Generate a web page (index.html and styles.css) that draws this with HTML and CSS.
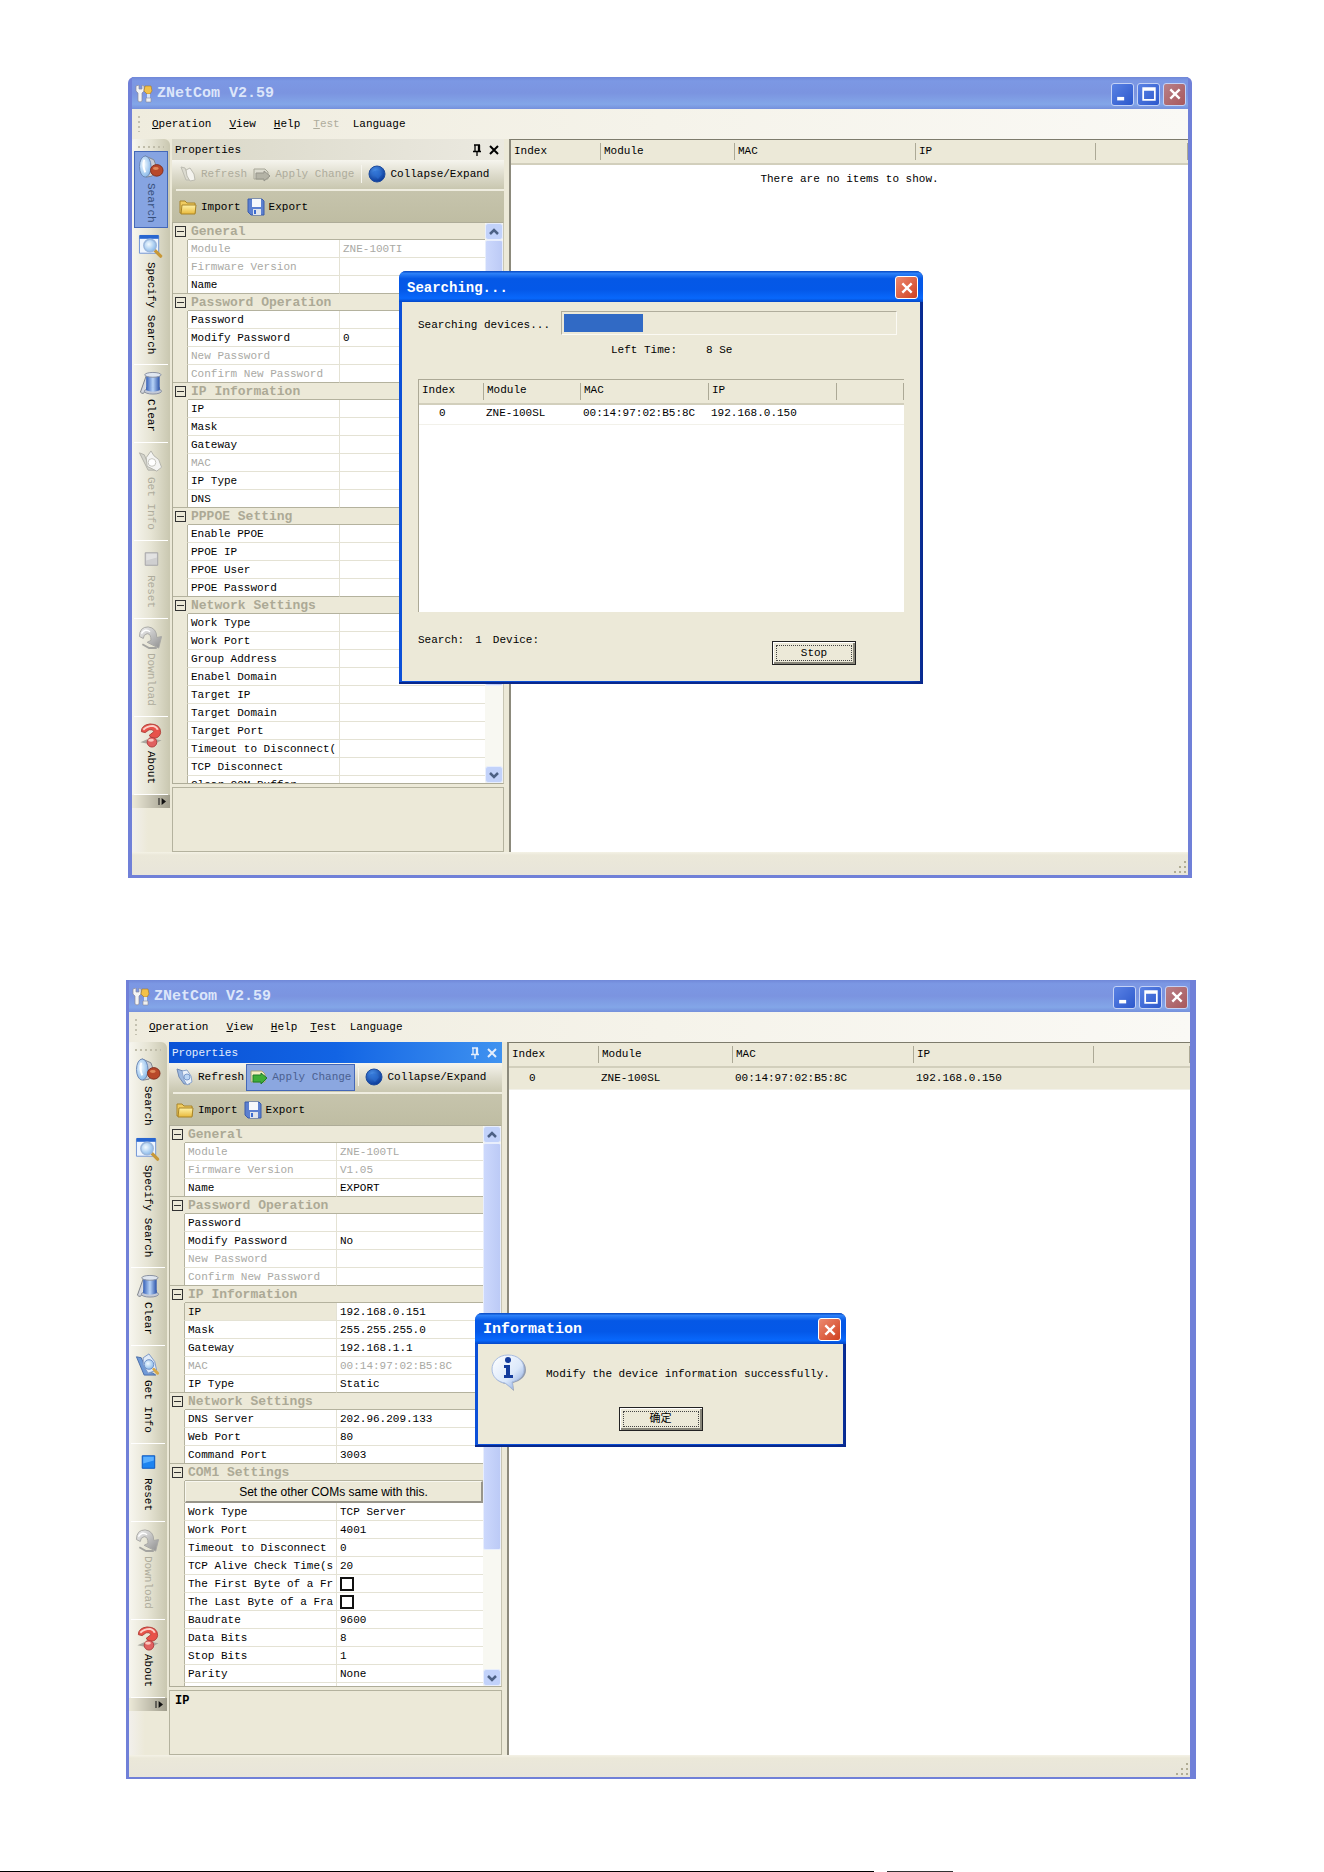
FILE: index.html
```html
<!DOCTYPE html>
<html lang="en">

<head>
  <meta charset="UTF-8">
  <title>ZNetCom V2.59</title>
  <link rel="stylesheet" href="styles.css">
</head>

<body>

  <!-- ICONS -->
  <svg class="icon-defs" width="0" height="0" aria-hidden="true">
    <defs>
      <linearGradient id="gBlue" x1="0" y1="0" x2="1" y2="0">
        <stop offset="0" stop-color="#3560b8" /><stop offset=".5" stop-color="#b8d4f8" /><stop offset="1" stop-color="#2b52a8" />
      </linearGradient>
      <radialGradient id="gLens" cx=".4" cy=".4" r=".7">
        <stop offset="0" stop-color="#f2faff" /><stop offset="1" stop-color="#7db2e8" />
      </radialGradient>
      <radialGradient id="gGlobe" cx=".4" cy=".3" r=".7">
        <stop offset="0" stop-color="#4a90e8" /><stop offset="1" stop-color="#0a3a9a" />
      </radialGradient>
      <linearGradient id="gFolder" x1="0" y1="0" x2="0" y2="1">
        <stop offset="0" stop-color="#fff3a8" /><stop offset="1" stop-color="#e8b83a" />
      </linearGradient>
      <linearGradient id="gGray" x1="0" y1="0" x2="1" y2="1">
        <stop offset="0" stop-color="#f2f2f2" /><stop offset="1" stop-color="#8e8e8e" />
      </linearGradient>
      <linearGradient id="gBubble" x1="0" y1="0" x2="1" y2="1">
        <stop offset="0" stop-color="#ffffff" /><stop offset=".6" stop-color="#dbe8fa" /><stop offset="1" stop-color="#7c9cd8" />
      </linearGradient>
    </defs>
    <symbol id="app" viewBox="0 0 18 18">
      <path d="M1 1v5l2 2v8q2 2 4 0V8l2-2V1L7 0v4H4V0z" fill="#f4f4f4" stroke="#8a8a98" stroke-width=".7" />
      <path d="M10 1h6l1 5-2 3h-3l-3-3z" fill="#f2c14a" stroke="#a87820" stroke-width=".6" />
      <path d="M12 9h3v4h-3z" fill="#d8e4f4" /><path d="M11 13h5v4h-5z" fill="#f0f0f0" stroke="#8a8a98" stroke-width=".6" />
    </symbol>
    <symbol id="search" viewBox="0 0 26 26">
      <path d="M7 1l9 4 3 8-5 9-6 1z" fill="#c9cdd4" stroke="#7d8590" />
      <ellipse cx="7" cy="12" rx="6" ry="11" fill="url(#gLens)" stroke="#6b86b4" />
      <path d="M6 5q-2 6 1 13" stroke="#fff" stroke-width="2" fill="none" />
      <ellipse cx="19" cy="16" rx="6.500" ry="6" fill="#b8482a" stroke="#803020" /><ellipse cx="18" cy="14" rx="3" ry="1.500" fill="#e08a5c" />
    </symbol>
    <symbol id="specify" viewBox="0 0 26 26">
      <path d="M1 2h20v18H1z" fill="#eef5fe" stroke="#6f94d4" /><path d="M1 1h20v4H1z" fill="#2866d0" />
      <path d="M17 17l6 6" stroke="#c89838" stroke-width="3.500" stroke-linecap="round" />
      <circle cx="12" cy="12" r="6.500" fill="url(#gLens)" stroke="#9db8dc" stroke-width="1.500" />
    </symbol>
    <symbol id="clear" viewBox="0 0 26 26">
      <path d="M8 5L2 22q3 3 5-1" fill="#d4d8e0" stroke="#7c8088" />
      <path d="M8 4h14v17H8z" fill="url(#gBlue)" /><ellipse cx="15" cy="4" rx="8.500" ry="2.500" fill="#dfe6f0" stroke="#8890a0" />
      <ellipse cx="15" cy="21" rx="9" ry="3" fill="#c4cad8" stroke="#8890a0" /><path d="M8 17h14v3q-7 3-14 0z" fill="url(#gBlue)" />
    </symbol>
    <symbol id="getinfo" viewBox="0 0 26 26">
      <path d="M1 5l5 1 6 14 6 2 3 2-12 0z" fill="#6f9ad8" stroke="#4a6ca8" />
      <path d="M8 6l6-4 6 8 2 9-9 3-5-9z" fill="#dfeaf8" stroke="#7c98c8" />
      <circle cx="14" cy="13" r="5" fill="url(#gLens)" stroke="#6c8cc4" /><path d="M19 18l4 4" stroke="#d8a848" stroke-width="3" stroke-linecap="round" />
    </symbol>
    <symbol id="getinfo-off" viewBox="0 0 26 26">
      <path d="M1 4l5 2 5 12 7 4-8 0z" fill="#d4d4cc" stroke="#b0b0a8" />
      <path d="M8 9l5-7 3 5 5 4 3 8-5 4-10-5z" fill="#f4f4f2" stroke="#b4b4ac" /><circle cx="14" cy="14" r="4" fill="#fff" stroke="#c4c4bc" />
    </symbol>
    <symbol id="reset" viewBox="0 0 26 26">
      <path d="M7 6h13v13H7z" fill="#1e84f0" stroke="#0a56c0" /><path d="M8 7h11v4L8 14z" fill="#5cb0ff" />
    </symbol>
    <symbol id="reset-off" viewBox="0 0 26 26">
      <path d="M7 6h13v13H7z" fill="#cfcfd0" stroke="#a4a4a8" /><path d="M8 7h11v4L8 14z" fill="#e2e2e2" />
    </symbol>
    <symbol id="download" viewBox="0 0 26 26">
      <path d="M1 12Q1 2 10 2q9 1 9 11l5-1-3 12-12-6 4-2q0-7-4-7-4 1-4 5z" fill="url(#gGray)" stroke="#a8a8a4" />
      <path d="M3 9q4-6 9-2" stroke="#fff" stroke-width="1.500" fill="none" /><path d="M4 20l7 4 8 0" stroke="#a4a4a0" stroke-width="2" fill="none" />
    </symbol>
    <symbol id="about" viewBox="0 0 26 26">
      <path d="M2 20l7-3 3 5zM24 18l-6-1-2 5z" fill="#a8a8a0" />
      <path d="M3 9Q3 2 12 1q11 0 11 9-1 6-8 6l-4-3 5-4q-1-3-5-2l-4 3z" fill="#e8524a" stroke="#b04038" />
      <path d="M5 7q4-4 10-4 4 1 5 4" stroke="#fbd0c8" stroke-width="2" fill="none" />
      <circle cx="14" cy="20" r="5" fill="#e06060" stroke="#b04040" /><ellipse cx="13" cy="18" rx="3" ry="1.500" fill="#fbc8c0" />
    </symbol>
    <symbol id="refresh" viewBox="0 0 18 18">
      <path d="M1 1l6 2 4 10 3 3H8L3 9z" fill="#9cb8e0" stroke="#7088b0" /><path d="M6 3l5-1 4 6 1 6-5 3-3-5z" fill="#eaf1fa" stroke="#8aa4cc" /><circle cx="11" cy="9" r="3" fill="#bcd6f4" stroke="#7c9ccc" />
    </symbol>
    <symbol id="refresh-off" viewBox="0 0 18 18">
      <path d="M2 2l4 1 4 9 2 3-5 0z" fill="#dcdbd0" stroke="#bcbbb0" /><path d="M7 5l4-2 4 6 1 6-5 1-3-5z" fill="#f4f3ee" stroke="#bcbbb0" />
    </symbol>
    <symbol id="apply" viewBox="0 0 18 18">
      <path d="M1 3h11l3 3v8H1z" fill="#f6eec4" stroke="#a0a078" /><path d="M3 7h8V5l6 5-6 6v-2H3z" fill="#3fae38" stroke="#1f7c28" />
    </symbol>
    <symbol id="apply-off" viewBox="0 0 18 18">
      <path d="M1 4h11l3 3v7H1z" fill="#dddcd0" stroke="#a8a798" /><path d="M3 8h8V6l6 5-6 5v-2H3z" fill="#b4b3a6" stroke="#96958a" />
    </symbol>
    <symbol id="globe" viewBox="0 0 18 18">
      <circle cx="9" cy="9" r="8" fill="url(#gGlobe)" stroke="#1f4c9c" /><path d="M4 8q3-4 7-2l3 3-4 5z" fill="#2a6cd0" opacity=".6" />
    </symbol>
    <symbol id="import" viewBox="0 0 18 18">
      <path d="M1 3h5l2 2h8v10H1z" fill="#f0cc60" stroke="#a88428" /><path d="M3 7h14l-1 9H2z" fill="url(#gFolder)" stroke="#a88428" />
    </symbol>
    <symbol id="export" viewBox="0 0 18 18">
      <path d="M1 1h14l2 2v14H4l-3-3z" fill="#5c80d0" stroke="#3a5cac" /><path d="M5 1h9v8H5z" fill="#f6f8fc" /><path d="M6 11h8v6H6z" fill="#dfe4ec" /><path d="M7 12h2v4H7z" fill="#3c6cd0" />
    </symbol>
    <symbol id="pin" viewBox="0 0 10 12">
      <path d="M2 1h6M3 1v6M6.500 1v6M7.500 1v6M1 7.500h8M5 8v4" fill="none" stroke="currentColor" stroke-width="1.300" />
    </symbol>
    <symbol id="cross" viewBox="0 0 12 12"><path d="M2 2l8 8M10 2l-8 8" fill="none" stroke="currentColor" stroke-width="2" /></symbol>
    <symbol id="minimize" viewBox="0 0 12 12"><path d="M1 10h6" fill="none" stroke="currentColor" stroke-width="3" /></symbol>
    <symbol id="maximize" viewBox="0 0 12 12"><path d="M1 1h10v10H1zM1 2.500h10" fill="none" stroke="currentColor" stroke-width="1.500" /></symbol>
    <symbol id="up" viewBox="0 0 12 12"><path d="M2 8l4-4 4 4" fill="none" stroke="#4d6185" stroke-width="2.500" /></symbol>
    <symbol id="down" viewBox="0 0 12 12"><path d="M2 4l4 4 4-4" fill="none" stroke="#4d6185" stroke-width="2.500" /></symbol>
    <symbol id="more" viewBox="0 0 10 8"><path d="M1 0v8" stroke="#222" stroke-width="1.300" /><path d="M4 0l5 4-5 4z" fill="#111" /></symbol>
    <symbol id="size-grip" viewBox="0 0 12 12"><path d="M10 0h2v2h-2zM10 5h2v2h-2zM5 5h2v2H5zM10 10h2v2h-2zM5 10h2v2H5zM0 10h2v2H0z" fill="#b0ac94" /></symbol>
    <symbol id="info" viewBox="0 0 38 38">
      <path d="M19 2C9 2 3 9 3 16c0 8 6 13 13 14l8 7-1-8c8-2 13-7 13-13C36 8 29 2 19 2z" fill="#6c7ca0" opacity=".7" />
      <path d="M18 1C8 1 2 8 2 15c0 8 6 13 13 14l8 6-1-7c8-2 12-7 12-13C34 7 28 1 18 1z" fill="url(#gBubble)" stroke="#a8bce0" />
      <circle cx="18" cy="6" r="3" fill="#143c9c" /><path d="M14 11h6v10h3v3h-9v-3h2v-7h-2z" fill="#143c9c" />
    </symbol>
  </svg>

  <!-- SEARCH WINDOW -->
  <section class="window window-search">
    <header class="titlebar">
      <svg class="icon-small"><use href="#app" /></svg>
      <h1>ZNetCom V2.59</h1>
      <button class="caption" aria-label="Minimize"><svg><use href="#minimize" /></svg></button>
      <button class="caption" aria-label="Maximize"><svg><use href="#maximize" /></svg></button>
      <button class="caption caption-close" aria-label="Close"><svg><use href="#cross" /></svg></button>
    </header>

    <nav class="menubar">
      <button><u>O</u>peration</button>
      <button><u>V</u>iew</button>
      <button class="tight"><u>H</u>elp</button>
      <button class="tight" disabled><u>T</u>est</button>
      <button>Language</button>
    </nav>

    <div class="window-body">
      <aside class="strip">
        <div class="strip-items">
          <button class="strip-first selected"><svg><use href="#search" /></svg><span>Search</span></button>
          <button><svg><use href="#specify" /></svg><span>Specify Search</span></button>
          <button><svg><use href="#clear" /></svg><span>Clear</span></button>
          <button disabled><svg><use href="#getinfo-off" /></svg><span>Get Info</span></button>
          <button disabled><svg><use href="#reset-off" /></svg><span>Reset</span></button>
          <button disabled><svg><use href="#download" /></svg><span>Download</span></button>
          <button><svg><use href="#about" /></svg><span>About</span></button>
        </div>
        <button class="strip-more" aria-label="More"><svg><use href="#more" /></svg></button>
      </aside>

      <div class="panel">
        <div class="panel-head">
          <h2>Properties</h2>
          <svg><use href="#pin" /></svg>
          <svg><use href="#cross" /></svg>
        </div>
        <div class="toolbar">
          <div class="toolbar-row">
            <button disabled><svg class="icon-small"><use href="#refresh-off" /></svg>Refresh</button>
            <button disabled><svg class="icon-small"><use href="#apply-off" /></svg>Apply Change</button>
            <i class="divider"></i>
            <button><svg class="icon-small"><use href="#globe" /></svg>Collapse/Expand</button>
          </div>
          <div class="toolbar-row">
            <button><svg class="icon-small"><use href="#import" /></svg>Import</button>
            <button><svg class="icon-small"><use href="#export" /></svg>Export</button>
          </div>
        </div>
        <div class="grid-box">
          <div class="grid-clip">
            <table class="grid">
              <colgroup><col class="col-gutter"><col class="col-name"><col></colgroup>
              <tbody id="searchGrid"></tbody>
            </table>
          </div>
          <div class="scrollbar">
            <button aria-label="Scroll up"><svg><use href="#up" /></svg></button>
            <div class="thumb"></div>
            <button aria-label="Scroll down"><svg><use href="#down" /></svg></button>
          </div>
        </div>
        <div class="description"></div>
      </div>

      <div class="list">
        <table class="devices">
          <colgroup><col class="col-index"><col class="col-module"><col class="col-mac"><col class="col-ip"><col></colgroup>
          <thead>
            <tr><th>Index</th><th>Module</th><th>MAC</th><th>IP</th><th></th></tr>
          </thead>
        </table>
        <p class="empty">There are no items to show.</p>
      </div>
    </div>
    <footer class="statusbar"><svg><use href="#size-grip" /></svg></footer>

    <div class="dialog dialog-search" role="dialog" aria-labelledby="searchTitle">
      <header class="dialog-title">
        <h2 id="searchTitle">Searching...</h2>
        <button class="caption dialog-close" aria-label="Close"><svg><use href="#cross" /></svg></button>
      </header>
      <div class="search-content">
        <div class="progress-row">
          <span>Searching devices...</span>
          <div class="progress"><div class="progress-fill" style="width: 24%"></div></div>
        </div>
        <p class="time-left"><span>Left Time:</span><span>8 Se</span></p>
        <div class="found-box">
          <table class="devices found">
            <colgroup><col class="col-index"><col class="col-module"><col class="col-mac"><col class="col-ip"><col></colgroup>
            <thead>
              <tr><th>Index</th><th>Module</th><th>MAC</th><th>IP</th><th></th></tr>
            </thead>
            <tbody>
              <tr><td>0</td><td>ZNE-100SL</td><td>00:14:97:02:B5:8C</td><td>192.168.0.150</td><td></td></tr>
            </tbody>
          </table>
        </div>
        <div class="search-foot">
          <p><span>Search:</span><span>1</span><span>Device:</span></p>
          <button class="classic"><span>Stop</span></button>
        </div>
      </div>
    </div>
  </section>

  <!-- MODIFY WINDOW -->
  <section class="window window-modify">
    <header class="titlebar">
      <svg class="icon-small"><use href="#app" /></svg>
      <h1>ZNetCom V2.59</h1>
      <button class="caption" aria-label="Minimize"><svg><use href="#minimize" /></svg></button>
      <button class="caption" aria-label="Maximize"><svg><use href="#maximize" /></svg></button>
      <button class="caption caption-close" aria-label="Close"><svg><use href="#cross" /></svg></button>
    </header>

    <nav class="menubar">
      <button><u>O</u>peration</button>
      <button><u>V</u>iew</button>
      <button class="tight"><u>H</u>elp</button>
      <button class="tight"><u>T</u>est</button>
      <button>Language</button>
    </nav>

    <div class="window-body">
      <aside class="strip">
        <div class="strip-items">
          <button class="strip-first"><svg><use href="#search" /></svg><span>Search</span></button>
          <button><svg><use href="#specify" /></svg><span>Specify Search</span></button>
          <button><svg><use href="#clear" /></svg><span>Clear</span></button>
          <button><svg><use href="#getinfo" /></svg><span>Get Info</span></button>
          <button><svg><use href="#reset" /></svg><span>Reset</span></button>
          <button disabled><svg><use href="#download" /></svg><span>Download</span></button>
          <button><svg><use href="#about" /></svg><span>About</span></button>
        </div>
        <button class="strip-more" aria-label="More"><svg><use href="#more" /></svg></button>
      </aside>

      <div class="panel">
        <div class="panel-head active">
          <h2>Properties</h2>
          <svg><use href="#pin" /></svg>
          <svg><use href="#cross" /></svg>
        </div>
        <div class="toolbar">
          <div class="toolbar-row">
            <button><svg class="icon-small"><use href="#refresh" /></svg>Refresh</button>
            <button class="selected"><svg class="icon-small"><use href="#apply" /></svg>Apply Change</button>
            <i class="divider"></i>
            <button><svg class="icon-small"><use href="#globe" /></svg>Collapse/Expand</button>
          </div>
          <div class="toolbar-row">
            <button><svg class="icon-small"><use href="#import" /></svg>Import</button>
            <button><svg class="icon-small"><use href="#export" /></svg>Export</button>
          </div>
        </div>
        <div class="grid-box">
          <div class="grid-clip">
            <table class="grid">
              <colgroup><col class="col-gutter"><col class="col-name"><col></colgroup>
              <tbody id="modifyGrid"></tbody>
            </table>
          </div>
          <div class="scrollbar">
            <button aria-label="Scroll up"><svg><use href="#up" /></svg></button>
            <div class="thumb"></div>
            <button aria-label="Scroll down"><svg><use href="#down" /></svg></button>
          </div>
        </div>
        <div class="description">IP</div>
      </div>

      <div class="list">
        <table class="devices">
          <colgroup><col class="col-index"><col class="col-module"><col class="col-mac"><col class="col-ip"><col></colgroup>
          <thead>
            <tr><th>Index</th><th>Module</th><th>MAC</th><th>IP</th><th></th></tr>
          </thead>
          <tbody>
            <tr class="current"><td>0</td><td>ZNE-100SL</td><td>00:14:97:02:B5:8C</td><td>192.168.0.150</td><td></td></tr>
          </tbody>
        </table>
      </div>
    </div>
    <footer class="statusbar"><svg><use href="#size-grip" /></svg></footer>

    <div class="dialog dialog-info" role="dialog" aria-labelledby="infoTitle">
      <header class="dialog-title">
        <h2 id="infoTitle">Information</h2>
        <button class="caption dialog-close" aria-label="Close"><svg><use href="#cross" /></svg></button>
      </header>
      <div class="info-content">
        <div class="info-message">
          <svg><use href="#info" /></svg>
          <p>Modify the device information successfully.</p>
        </div>
        <button class="classic"><span>确定</span></button>
      </div>
    </div>
  </section>

  <div class="page-rule"></div>

  <script src="script.js"></script>
</body>

</html>
```

FILE: styles.css
```css
* {
  box-sizing: border-box;
}

body {
  margin: 0;
  background: #fff;
  font-family: "Liberation Mono", "Noto Sans CJK SC", monospace;
  font-size: 11px;
  line-height: 14px;
  color: #000;
}

h1,
h2,
p {
  margin: 0;
}

button {
  font: inherit;
  color: inherit;
  padding: 0;
  border: 0;
  background: none;
  white-space: nowrap;
}

button:disabled {
  color: #aeac9c;
}

svg {
  display: block;
  flex: none;
}

.icon-defs {
  position: absolute;
}

.icon-small {
  width: 18px;
  height: 18px;
}

/* window frame */
.window {
  position: relative;
  padding: 0 4px 3px;
  background: #7080d8;
  border-radius: 6px 6px 0 0;
}

.window-search {
  margin: 77px 132px 102px 128px;
}

.window-modify {
  margin: 0 128px 92px 126px;
  padding: 0 6px 2px 3px;
  border-radius: 0;
}

.titlebar {
  display: flex;
  align-items: center;
  gap: 3px;
  height: 32px;
  padding: 2px 2px 0 3px;
  background: linear-gradient(#7088d8 0, #7c98e4 12%, #7b94e0 50%, #83a6e8 85%, #7590dc 100%);
}

.titlebar h1 {
  flex: 1;
  padding-left: 1px;
  font-size: 15px;
  line-height: 20px;
  color: #dce6fa;
}

.caption {
  display: grid;
  place-items: center;
  width: 23px;
  height: 23px;
  border: 1px solid #c4d2f6;
  border-radius: 3px;
  background: linear-gradient(135deg, #5a82e4, #2c58cc);
  color: #fff;
}

.caption svg {
  width: 14px;
  height: 14px;
}

.caption-close {
  background: linear-gradient(135deg, #b88088, #a8585c);
}

.menubar {
  display: flex;
  align-items: center;
  height: 30px;
  padding-left: 6px;
  background: linear-gradient(90deg, #efecde, #f5f3ea 50%, #faf9f5);
}

.menubar::before {
  content: "";
  width: 2px;
  height: 16px;
  margin-right: 12px;
  background: repeating-linear-gradient(#c4c1b0 0 2px, transparent 2px 5px);
}

.menubar button {
  margin-right: 18px;
}

.menubar .tight {
  margin-right: 13px;
}

.window-body {
  display: flex;
  background: #ece9d8;
}

/* vertical tool strip */
.strip {
  width: 40px;
  flex: none;
  background: linear-gradient(90deg, #f2f0ec, #ece9d8 40%);
}

.strip-items {
  display: flex;
  flex-direction: column;
  width: 38px;
  padding: 0 2px;
  border-radius: 4px 6px 0 0;
  background: linear-gradient(90deg, #f7f6ef, #e6e4d4 50%, #c9c7b0);
}

.strip-items::before {
  content: "";
  height: 2px;
  margin: 7px 4px 3px;
  background: repeating-linear-gradient(90deg, #c0bdaa 0 2px, transparent 2px 5px);
}

.strip-items button {
  display: flex;
  flex-direction: column;
  align-items: center;
  padding: 6px 0 10px;
  border-bottom: 1px solid #fff;
}

.strip-items svg {
  width: 26px;
  height: 25px;
}

.strip-items span {
  writing-mode: vertical-rl;
  margin-top: 3px;
}

.strip-items .strip-first {
  padding: 3px 0 4px;
  border: 1px solid transparent;
}

.strip-items .selected {
  border-color: #4468b8;
  background: #86a4e2;
  color: #37507c;
}

.strip-more {
  display: flex;
  justify-content: flex-end;
  align-items: center;
  width: 38px;
  height: 13px;
  padding-right: 3px;
  background: linear-gradient(90deg, #ece9d8, #a09d8c);
}

.strip-more svg {
  width: 9px;
  height: 7px;
}

/* properties panel */
.panel {
  width: 332px;
  flex: none;
  margin-right: 5px;
}

.window-modify .panel {
  width: 333px;
}

.panel-head {
  display: flex;
  align-items: center;
  gap: 5px;
  height: 21px;
  padding: 0 4px 0 3px;
  background: linear-gradient(90deg, #dad8c8, #ebe9e0);
}

.panel-head.active {
  background: linear-gradient(90deg, #0a52d6, #1264e4 50%, #3f92f0);
  color: #e4eefc;
}

.panel-head h2 {
  flex: 1;
  font-size: 11px;
  font-weight: normal;
}

.panel-head svg {
  width: 12px;
  height: 12px;
}

.toolbar {
  height: 62px;
  padding-left: 4px;
  background: linear-gradient(#f6f5ee, #dcdaca 25%, #c6c4ac 50%, #bfbda3);
}

.toolbar-row {
  display: flex;
  align-items: center;
  height: 31px;
}

.toolbar-row:first-child {
  padding-bottom: 1px;
  border-bottom: 2px solid #efede0;
}

.toolbar-row button {
  display: flex;
  align-items: center;
  gap: 4px;
  height: 25px;
  padding: 0 3px;
}

.toolbar-row .selected {
  background: #8ba7e0;
  color: #4a6090;
  box-shadow: 0 0 0 1px #4468b8;
}

.divider {
  width: 1px;
  height: 18px;
  margin: 0 3px 0 4px;
  background: #f6f5ee;
}

.grid-box {
  display: flex;
  height: 562px;
  border: 1px solid #aeac98;
  border-right-color: #c8c6b4;
}

.grid-clip {
  flex: 1;
  overflow: hidden;
}

.grid {
  width: 100%;
  table-layout: fixed;
  border-collapse: separate;
  border-spacing: 0;
}

.grid .col-gutter {
  width: 15px;
}

.grid .col-name {
  width: 152px;
}

.grid td {
  height: 18px;
  padding: 0 3px;
  border-bottom: 1px solid #e4e2d4;
  border-right: 1px solid #e4e2d4;
  background: #fff;
  line-height: 16px;
  white-space: nowrap;
  overflow: hidden;
}

.grid td:last-child {
  border-right: 0;
}

.grid td:first-child {
  padding: 0 0 0 2px;
  border-right-color: #b4b29e;
  border-bottom-color: #ece9d8;
  background: #ece9d8;
}

.grid .category td {
  height: 17px;
  border-bottom-color: #b4b29e;
  background: #ece9d8;
  font-size: 13px;
  font-weight: bold;
  line-height: 15px;
  color: #aca996;
}

.grid .category td:first-child {
  border-right-color: #ece9d8;
  border-bottom-color: #ece9d8;
}

.grid .before-category td {
  border-bottom-color: #b4b29e;
}

.grid .off {
  color: #a9a9a4;
}

.grid .current td:nth-child(2) {
  background: #ece9d8;
}

.grid .expander {
  display: block;
  width: 11px;
  height: 11px;
  padding: 4px 1px;
  border: 1px solid #333;
  background: #333 content-box;
}

.grid input {
  appearance: none;
  display: block;
  width: 14px;
  height: 14px;
  margin: 1px 0;
  border: 2px solid #111;
  background: #fff;
}

.grid .wide td:last-child {
  height: 22px;
  padding: 0;
  border-bottom: 0;
}

.same-button {
  display: block;
  width: 100%;
  height: 22px;
  border: 1px solid #f8f7f0;
  border-right: 2px solid #98958a;
  border-bottom: 2px solid #98958a;
  background: #ece9d8;
  font-family: "Liberation Sans", sans-serif;
  font-size: 12px;
}

.scrollbar {
  display: flex;
  flex-direction: column;
  width: 18px;
  background: #f8f8f2;
}

.scrollbar button {
  display: grid;
  place-items: center;
  height: 17px;
  border: 1px solid #e8eefc;
  border-radius: 3px;
  background: #c2d2fa;
}

.scrollbar button:last-child {
  margin-top: auto;
}

.scrollbar svg {
  width: 12px;
  height: 12px;
}

.thumb {
  height: 446px;
  border: 1px solid #e8eefc;
  border-radius: 2px;
  background: linear-gradient(90deg, #ccd8fc, #bccaf6);
}

.window-modify .thumb {
  height: 407px;
}

.description {
  height: 65px;
  margin-top: 3px;
  padding: 2px 5px;
  border: 1px solid #b4b29e;
  font-size: 12px;
  font-weight: bold;
  line-height: 16px;
}

/* device list */
.list {
  flex: 1;
  border-top: 1px solid #7d7b6c;
  border-left: 2px solid #8c8a7c;
  background: #fff;
}

.devices {
  width: 100%;
  table-layout: fixed;
  border-collapse: separate;
  border-spacing: 0;
}

.devices .col-index {
  width: 90px;
}

.devices .col-module {
  width: 134px;
}

.devices .col-mac {
  width: 181px;
}

.devices .col-ip {
  width: 180px;
}

.devices th {
  height: 25px;
  padding: 0 2px 2px 3px;
  border-bottom: 2px solid #d2cfbc;
  background: linear-gradient(#aca996, #aca996) right 3px / 1px 17px no-repeat #ece9d8;
  font-weight: normal;
  text-align: left;
}

.devices td {
  height: 22px;
  padding: 0 2px 2px;
  border-bottom: 1px solid #f2f1ea;
}

.devices td:first-child {
  padding-left: 20px;
}

.devices .current td {
  background: #ece9d8;
}

.empty {
  padding-top: 7px;
  text-align: center;
}

.statusbar {
  display: flex;
  justify-content: flex-end;
  align-items: flex-end;
  height: 23px;
  padding: 2px;
  background: linear-gradient(#f4f2e6, #ebe8d9 3px, #e8e5da);
}

.window-modify .statusbar {
  height: 22px;
}

.statusbar svg {
  width: 12px;
  height: 12px;
}

/* dialogs */
.dialog {
  position: absolute;
  padding: 0 3px 3px;
  border-radius: 7px 7px 0 0;
  background: linear-gradient(90deg, #0c50d8, #0c48c8 97%, #08288c);
  box-shadow: inset 0 -2px #08288c;
}

.dialog-search {
  top: 194px;
  left: 271px;
  width: 524px;
}

.dialog-info {
  top: 333px;
  left: 349px;
  width: 371px;
}

.dialog-title {
  display: flex;
  align-items: center;
  height: 31px;
  margin: 0 -3px;
  padding: 2px 5px 0 8px;
  border-radius: 7px 7px 0 0;
  background: linear-gradient(#0848c0 0, #2c80f8 8%, #0558e6 25%, #0458e8 60%, #0868fc 88%, #0448c8 100%);
}

.dialog-title h2 {
  flex: 1;
  font-size: 14px;
  line-height: 18px;
  color: #fff;
}

.dialog-close {
  border-color: #fff;
  background: linear-gradient(135deg, #ec8a70, #d04020);
}

.search-content {
  height: 379px;
  padding: 9px 16px 0;
  background: #ece9d8;
}

.progress-row {
  display: flex;
  justify-content: space-between;
  padding-right: 7px;
}

.progress-row span {
  padding-top: 7px;
}

.progress {
  width: 336px;
  height: 24px;
  padding: 2px;
  border: 1px solid;
  border-color: #b0ad9c #fbfaf4 #fbfaf4 #b0ad9c;
}

.progress-fill {
  height: 18px;
  background: #316ac5;
}

.time-left {
  display: flex;
  gap: 29px;
  margin: 8px 0 22px;
  padding-left: 193px;
}

.found-box {
  height: 233px;
  border-top: 1px solid #aca996;
  border-left: 1px solid #aca996;
  background: #fff;
}

.found .col-index {
  width: 65px;
}

.found .col-module {
  width: 97px;
}

.found .col-mac,
.found .col-ip {
  width: 128px;
}

.found th {
  padding-bottom: 4px;
}

.found td {
  height: 20px;
  padding-bottom: 4px;
}

.search-foot {
  display: flex;
  justify-content: space-between;
  padding: 21px 48px 0 0;
}

.search-foot p {
  display: flex;
  gap: 11px;
}

.classic {
  width: 84px;
  height: 24px;
  padding: 3px;
  border: 1px solid #222;
  background: #ece9d8;
  box-shadow: inset 1px 1px #fff, inset -2px -2px #88867a;
}

.classic span {
  display: block;
  height: 16px;
  border: 1px dotted #444;
  line-height: 14px;
}

.search-foot .classic {
  margin-top: 8px;
}

.dialog-info h2 {
  font-size: 15px;
}

.info-content {
  height: 100px;
  padding: 10px 12px 0;
  background: #ece9d8;
}

.info-message {
  display: flex;
  gap: 18px;
  white-space: nowrap;
}

.info-message svg {
  width: 38px;
  height: 38px;
}

.info-message p {
  padding-top: 13px;
}

.info-content .classic {
  display: block;
  margin: 15px auto 0;
}

.page-rule {
  height: 1px;
  background: linear-gradient(90deg, #000 66%, transparent 66% 67%, #333 67% 72%, transparent 72%);
}
```

FILE: script.js
```js
// name, value, disabled
const searchProps = [
  { title: "General", items: [["Module", "ZNE-100TI", true], ["Firmware Version", "", true], ["Name", ""]] },
  { title: "Password Operation", items: [["Password", ""], ["Modify Password", "0"], ["New Password", "", true], ["Confirm New Password", "", true]] },
  { title: "IP Information", items: [["IP", ""], ["Mask", ""], ["Gateway", ""], ["MAC", "", true], ["IP Type", ""], ["DNS", ""]] },
  { title: "PPPOE Setting", items: [["Enable PPOE", ""], ["PPOE IP", ""], ["PPOE User", ""], ["PPOE Password", ""]] },
  { title: "Network Settings", items: [["Work Type", ""], ["Work Port", ""], ["Group Address", ""], ["Enabel Domain", ""], ["Target IP", ""], ["Target Domain", ""], ["Target Port", ""], ["Timeout to Disconnect(", ""], ["TCP Disconnect", ""], ["Clear COM Buffer", ""]] }
];

const modifyProps = [
  { title: "General", items: [["Module", "ZNE-100TL", true], ["Firmware Version", "V1.05", true], ["Name", "EXPORT"]] },
  { title: "Password Operation", items: [["Password", ""], ["Modify Password", "No"], ["New Password", "", true], ["Confirm New Password", "", true]] },
  { title: "IP Information", items: [["IP", "192.168.0.151"], ["Mask", "255.255.255.0"], ["Gateway", "192.168.1.1"], ["MAC", "00:14:97:02:B5:8C", true], ["IP Type", "Static"]] },
  { title: "Network Settings", items: [["DNS Server", "202.96.209.133"], ["Web Port", "80"], ["Command Port", "3003"]] },
  { title: "COM1 Settings", button: "Set the other COMs same with this.", items: [["Work Type", "TCP Server"], ["Work Port", "4001"], ["Timeout to Disconnect", "0"], ["TCP Alive Check Time(s", "20"], ["The First Byte of a Fr", false], ["The Last Byte of a Fra", false], ["Baudrate", "9600"], ["Data Bits", "8"], ["Stop Bits", "1"], ["Parity", "None"], ["Frame Length", "700"]] }
];

function addRow(tbody, className) {
  const tr = tbody.insertRow();
  tr.className = className;
  tr.insertCell();
  return tr;
}

function buildGrid(id, groups, current) {
  const tbody = document.getElementById(id);

  groups.forEach(group => {
    const head = addRow(tbody, "category");
    const expander = document.createElement("button");
    expander.className = "expander";
    expander.setAttribute("aria-label", "Collapse " + group.title);
    head.cells[0].appendChild(expander);
    const title = head.insertCell();
    title.colSpan = 2;
    title.textContent = group.title;

    if (group.button) {
      const cell = addRow(tbody, "wide").insertCell();
      cell.colSpan = 2;
      const button = document.createElement("button");
      button.className = "same-button";
      button.textContent = group.button;
      cell.appendChild(button);
    }

    group.items.forEach(([name, value, off], i) => {
      const tr = addRow(tbody, off ? "off" : "");
      if (i === group.items.length - 1) tr.classList.add("before-category");
      if (name === current) tr.classList.add("current");
      const nameCell = tr.insertCell();
      const valueCell = tr.insertCell();

      if (value === false) {
        const label = document.createElement("label");
        const box = document.createElement("input");
        box.type = "checkbox";
        box.id = id + i;
        label.htmlFor = box.id;
        label.textContent = name;
        nameCell.appendChild(label);
        valueCell.appendChild(box);
      } else {
        nameCell.textContent = name;
        valueCell.textContent = value;
      }
    });
  });
}

buildGrid("searchGrid", searchProps);
buildGrid("modifyGrid", modifyProps, "IP");
```
